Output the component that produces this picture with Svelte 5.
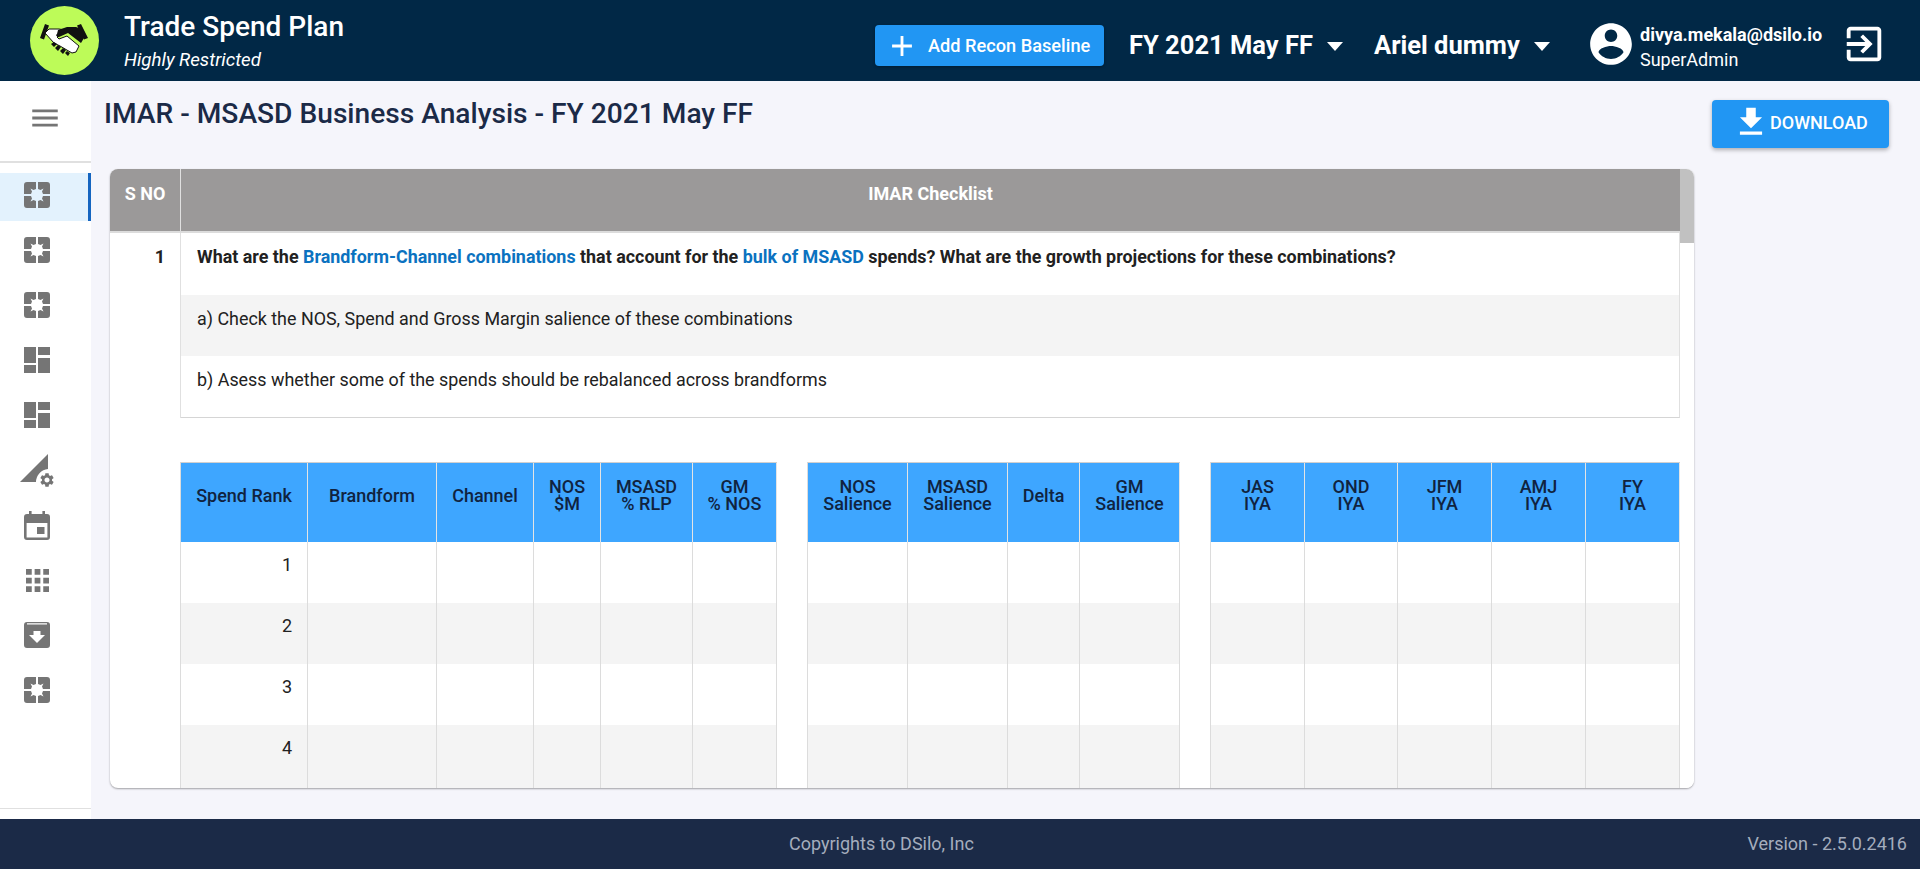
<script lang="ts">
  const nav = ['focus', 'focus', 'focus', 'dash', 'dash', 'signal', 'event', 'apps', 'archive', 'focus'];

  const tables = [
    [
      { label: ['Spend Rank'], w: 127 },
      { label: ['Brandform'], w: 129 },
      { label: ['Channel'], w: 97 },
      { label: ['NOS', '$M'], w: 67 },
      { label: ['MSASD', '% RLP'], w: 92 },
      { label: ['GM', '% NOS'], w: 84 }
    ],
    [
      { label: ['NOS', 'Salience'], w: 100 },
      { label: ['MSASD', 'Salience'], w: 100 },
      { label: ['Delta'], w: 72 },
      { label: ['GM', 'Salience'], w: 100 }
    ],
    [
      { label: ['JAS', 'IYA'], w: 94 },
      { label: ['OND', 'IYA'], w: 93 },
      { label: ['JFM', 'IYA'], w: 94 },
      { label: ['AMJ', 'IYA'], w: 94 },
      { label: ['FY', 'IYA'], w: 94 }
    ]
  ];
  const rows = [1, 2, 3, 4];
  const quadrant = 'M3 0H12V7L9.500 8 6.500 6.500 8 9.500 7 12H0V3A3 3 0 0 1 3 0Z';
</script>

<div class="page">
  <header class="topbar">
    <div class="logo">
      <svg width="50" height="34" viewBox="0 0 50 34">
        <path fill="#111" d="M5 0 9 1.500 4 15.500 0 14zM41 0 37 1.500 44 15.500 48 14z" />
        <path fill="#fff" stroke="#111" stroke-width="1" d="M9 5h10l6 1-8 7 2 2 8-3 12 10-3 6-4 1-12-7-6-3-9-10z" />
        <path fill="#111" d="M18 6 27 3h9l3 1 5 10-3 5-13-10-9 4c-2 0-4-2-2-3z" />
        <path fill="#111" d="m11 20 3-2 3 2-3 3zm4 4 3-3 3 2-3 4zm5 3 3-3 3 2-3 4zm5 2 2-2 3 2-2 3z" />
      </svg>
    </div>
    <div class="brand">
      <div class="brand-title">Trade Spend Plan</div>
      <div class="brand-sub">Highly Restricted</div>
    </div>
    <button class="add-btn">
      <svg width="34" height="34" viewBox="0 0 24 24"><path fill="#fff" d="M19 13h-6v6h-2v-6H5v-2h6V5h2v6h6z" /></svg>
      Add Recon Baseline
    </button>
    <div class="select first">FY 2021 May FF<span class="caret"></span></div>
    <div class="select second">Ariel dummy<span class="caret"></span></div>
    <svg class="avatar" width="50" height="50" viewBox="0 0 24 24"><path fill="#fff" d="M12 2C6.480 2 2 6.480 2 12s4.480 10 10 10 10-4.480 10-10S17.520 2 12 2zm0 3c1.660 0 3 1.340 3 3s-1.340 3-3 3-3-1.340-3-3 1.340-3 3-3zm0 14.200c-2.500 0-4.710-1.280-6-3.220.030-1.990 4-3.080 6-3.080 1.990 0 5.970 1.090 6 3.080-1.290 1.940-3.500 3.220-6 3.220z" /></svg>
    <div class="user">
      <div class="email">divya.mekala@dsilo.io</div>
      <div class="role">SuperAdmin</div>
    </div>
    <svg class="logout" width="46" height="46" viewBox="0 0 24 24"><path fill="#fff" d="M10.090 15.590 11.500 17l5-5-5-5-1.410 1.410L12.670 11H3v2h9.670l-2.580 2.590zM19 3H5c-1.110 0-2 .9-2 2v4h2V5h14v14H5v-4H3v4c0 1.100.89 2 2 2h14c1.100 0 2-.9 2-2V5c0-1.100-.9-2-2-2z" /></svg>
  </header>

  <div class="middle">
    <aside class="sidebar">
      <div class="burger">
        <svg width="34" height="34" viewBox="0 0 24 24"><path fill="#757575" d="M3 18h18v-2H3v2zm0-5h18v-2H3v2zm0-7v2h18V6H3z" /></svg>
      </div>
      <nav class="nav">
        {#each nav as icon, i}
          <div class="nav-item" class:active={i === 0}>
            <div class="icon">
              {#if icon === 'focus'}
                <svg width="26" height="26" viewBox="0 0 26 26" fill="#757575">
                  <path d={quadrant} />
                  <path d={quadrant} transform="rotate(90 13 13)" />
                  <path d={quadrant} transform="rotate(180 13 13)" />
                  <path d={quadrant} transform="rotate(270 13 13)" />
                </svg>
              {:else if icon === 'dash'}
                <svg width="26" height="26" viewBox="0 0 26 26"><path fill="#757575" d="M0 0h12v16H0zM14 0h12v8H14zM14 11h12v15H14zM0 18h12v8H0z" /></svg>
              {:else if icon === 'signal'}
                <svg width="34" height="34" viewBox="0 0 34 34" fill="#757575">
                  <path d="M0 29 28 1V16A13 13 0 0 0 16 29Z" />
                  <path transform="translate(18.600 18.600) scale(.7)" d="M19.140 12.940c.04-.3.06-.61.06-.94 0-.32-.02-.64-.07-.94l2.030-1.580c.18-.14.23-.41.12-.61l-1.920-3.320c-.12-.22-.37-.29-.59-.22l-2.390.96c-.5-.38-1.030-.7-1.620-.94l-.36-2.540c-.04-.24-.24-.41-.48-.41h-3.840c-.24 0-.43.17-.47.41l-.36 2.540c-.59.24-1.130.57-1.620.94l-2.390-.96c-.22-.08-.47 0-.59.22L2.740 8.870c-.12.21-.08.47.12.61l2.030 1.580c-.05.3-.09.63-.09.94s.02.64.07.94l-2.030 1.580c-.18.14-.23.41-.12.61l1.920 3.320c.12.22.37.29.59.22l2.390-.96c.5.38 1.030.7 1.620.94l.36 2.540c.05.24.24.41.48.41h3.840c.24 0 .44-.17.47-.41l.36-2.540c.59-.24 1.130-.56 1.620-.94l2.390.96c.22.08.47 0 .59-.22l1.920-3.320c.12-.22.07-.47-.12-.61l-2.010-1.580zM12 15.600c-1.980 0-3.600-1.620-3.600-3.600s1.620-3.600 3.600-3.600 3.600 1.620 3.600 3.600-1.620 3.600-3.600 3.600z" />
                </svg>
              {:else if icon === 'event'}
                <svg width="26" height="29" viewBox="0 0 26 29"><path fill="#757575" fill-rule="evenodd" d="M5 0h2.600v3h10.800V0H21v3h2a3 3 0 0 1 3 3v20a3 3 0 0 1-3 3H3a3 3 0 0 1-3-3V6a3 3 0 0 1 3-3h2zM2.600 12v14.400h20.800V12zM13 16h7.500v7H13z" /></svg>
              {:else if icon === 'apps'}
                <svg width="23" height="23" viewBox="0 0 24 24"><path fill="#757575" d="M0 0h6v6H0zM9 0h6v6H9zM18 0h6v6h-6zM0 9h6v6H0zM9 9h6v6H9zM18 9h6v6h-6zM0 18h6v6H0zM9 18h6v6H9zM18 18h6v6h-6z" /></svg>
              {:else}
                <svg width="26" height="26" viewBox="0 0 26 26"><path fill="#757575" fill-rule="evenodd" d="M3 0h20a3 3 0 0 1 3 3v20a3 3 0 0 1-3 3H3a3 3 0 0 1-3-3V3a3 3 0 0 1 3-3zm0 1.300v1.200h20V1.300zM9.500 9v4H5l8 8 8-8h-4.500V9z" /></svg>
              {/if}
            </div>
          </div>
        {/each}
      </nav>
      <div class="side-foot"></div>
    </aside>

    <main class="content">
      <div class="title-row">
        <h1>IMAR - MSASD Business Analysis - FY 2021 May FF</h1>
        <button class="download">
          <svg width="38" height="38" viewBox="0 0 24 24"><path fill="#fff" d="M19 9h-4V3H9v6H5l7 7 7-7zM5 18v2h14v-2H5z" /></svg>
          DOWNLOAD
        </button>
      </div>

      <section class="card">
        <div class="scroll-area">
          <div class="check-head">
            <div class="sno">S NO</div>
            <div class="check-title">IMAR Checklist</div>
          </div>
          <div class="check-body">
            <div class="num">1</div>
            <div class="check-list">
              <div class="q strong">What are the <span class="link">Brandform-Channel combinations</span> that account for the <span class="link">bulk of MSASD</span> spends? What are the growth projections for these combinations?</div>
              <div class="q alt">a) Check the NOS, Spend and Gross Margin salience of these combinations</div>
              <div class="q">b) Asess whether some of the spends should be rebalanced across brandforms</div>
            </div>
          </div>

          <div class="groups">
            {#each tables as columns, t}
              <div class="grid-table">
                <div class="grid-row head">
                  {#each columns as col}
                    <div class="th" style="width: {col.w}px">
                      {#each col.label as line}<span>{line}</span>{/each}
                    </div>
                  {/each}
                </div>
                {#each rows as r}
                  <div class="grid-row body" class:alt={r % 2 === 0}>
                    {#each columns as col, c}
                      <div class="td" style="width: {col.w}px">{t === 0 && c === 0 ? r : ''}</div>
                    {/each}
                  </div>
                {/each}
              </div>
            {/each}
          </div>
        </div>
        <div class="scrollbar"><div class="thumb"></div></div>
      </section>
    </main>
  </div>

  <footer class="footer">
    <span class="copy">Copyrights to DSilo, Inc</span>
    <span class="version">Version - 2.5.0.2416</span>
  </footer>
</div>

<style>
  :global(body) {
    margin: 0;
    font-family: Roboto, "Liberation Sans", sans-serif;
  }

  .page {
    display: flex;
    flex-direction: column;
    height: 869px;
    overflow: hidden;
    background: #f5f5fb;
  }

  .topbar {
    display: flex;
    align-items: center;
    flex: 0 0 81px;
    height: 81px;
    background: #012846;
    color: #fff;
    box-sizing: border-box;
    padding-left: 30px;
  }

  .logo {
    display: flex;
    align-items: center;
    justify-content: center;
    width: 69px;
    height: 69px;
    border-radius: 50%;
    background: #bdfb58;
    flex: none;
  }

  .brand {
    margin-left: 25px;
    width: 751px;
    padding-top: 1px;
  }

  .brand-title {
    font-size: 28px;
    font-weight: 500;
    line-height: 30px;
  }

  .brand-sub {
    font-size: 18.700px;
    font-style: italic;
    line-height: 20px;
    margin-top: 8px;
  }

  .add-btn {
    display: flex;
    align-items: center;
    width: 229px;
    height: 41px;
    margin-top: 10px;
    padding: 0 0 0 10px;
    border: 0;
    border-radius: 4px;
    background: #2196f3;
    color: #fff;
    font: 500 18.200px Roboto, sans-serif;
    white-space: nowrap;
    box-shadow: 0 1px 3px rgba(0, 0, 0, 0.3);
  }

  .add-btn svg {
    margin-right: 9px;
  }

  .select {
    display: flex;
    align-items: center;
    margin-top: 8px;
    font-size: 25.500px;
    font-weight: 700;
    white-space: nowrap;
  }

  .select.first {
    margin-left: 25px;
    width: 245px;
  }

  .select.second {
    width: 212px;
  }

  .caret {
    width: 0;
    height: 0;
    margin-left: 14px;
    margin-top: 4px;
    border-left: 8.500px solid transparent;
    border-right: 8.500px solid transparent;
    border-top: 9px solid #fff;
  }

  .avatar {
    flex: none;
    margin-top: 7px;
  }

  .user {
    margin-left: 4px;
    margin-top: 14px;
    width: 201px;
  }

  .email {
    font-size: 18px;
    font-weight: 700;
    line-height: 20px;
  }

  .role {
    font-size: 18px;
    line-height: 20px;
    margin-top: 5px;
  }

  .logout {
    flex: none;
    margin-top: 6px;
  }

  .middle {
    display: flex;
    flex: 1;
    min-height: 0;
  }

  .sidebar {
    display: flex;
    flex-direction: column;
    width: 91px;
    flex: none;
    background: #fff;
  }

  .burger {
    display: flex;
    align-items: center;
    justify-content: center;
    height: 82px;
    box-sizing: border-box;
    margin-left: -1px;
    padding-bottom: 6px;
    border-bottom: 2px solid #e0e0e0;
  }

  .nav {
    flex: 1;
    padding-top: 10px;
  }

  .nav-item {
    display: flex;
    align-items: center;
    height: 48px;
    margin-bottom: 7px;
    padding: 0 0 4px 24px;
    box-sizing: border-box;
  }

  .nav-item.active {
    background: #e3f2fd;
    box-shadow: inset -3px 0 0 #1565c0;
  }

  .icon {
    display: flex;
    justify-content: center;
    align-items: center;
    width: 26px;
  }

  .icon svg {
    flex: none;
  }

  .side-foot {
    height: 10px;
    border-top: 1px solid #e0e0e0;
  }

  .content {
    flex: 1;
    min-width: 0;
    padding: 0 31px 0 13px;
    box-sizing: border-box;
  }

  .title-row {
    display: flex;
    justify-content: space-between;
    align-items: flex-start;
    height: 88px;
  }

  h1 {
    margin: 17px 0 0;
    font-size: 28.150px;
    line-height: 32px;
    font-weight: 500;
    color: #1b2a47;
  }

  .download {
    display: flex;
    align-items: center;
    width: 177px;
    height: 48px;
    margin-top: 19px;
    padding: 0 0 4px 20px;
    border: 0;
    border-radius: 4px;
    background: #2196f3;
    color: #fff;
    font: 500 18px Roboto, sans-serif;
    box-shadow: 0 2px 4px rgba(0, 0, 0, 0.3);
  }

  .card {
    display: flex;
    width: 1584px;
    height: 619px;
    margin-left: 6px;
    background: #fff;
    border-radius: 8px;
    overflow: hidden;
    box-shadow: 0 1px 2px rgba(0, 0, 0, 0.35);
  }

  .scroll-area {
    width: 1570px;
    overflow: hidden;
  }

  .scrollbar {
    width: 14px;
    background: #fff;
  }

  .thumb {
    height: 74px;
    background: #c1c1c1;
  }

  .check-head {
    display: flex;
    height: 64px;
    background: #9b9999;
    color: #fff;
    font-size: 18px;
    font-weight: 700;
    border-bottom: 2px solid #dcdcdc;
    box-sizing: border-box;
  }

  .sno {
    width: 71px;
    box-sizing: border-box;
    padding-top: 14px;
    text-align: center;
    border-right: 1px solid #e0e0e0;
  }

  .check-title {
    flex: 1;
    padding-top: 14px;
    text-align: center;
  }

  .check-body {
    display: flex;
  }

  .num {
    width: 71px;
    box-sizing: border-box;
    padding: 14px 15px 0 0;
    text-align: right;
    font-size: 18px;
    line-height: 20px;
    font-weight: 700;
    color: #212121;
    border-right: 1px solid #e0e0e0;
  }

  .check-list {
    flex: 1;
    border-bottom: 1px solid #d5d5d5;
    border-right: 1px solid #e0e0e0;
  }

  .q {
    height: 61px;
    box-sizing: border-box;
    padding: 14px 0 0 16px;
    font-size: 17.900px;
    line-height: 20px;
    color: #212121;
  }

  .q.strong {
    height: 62px;
    font-weight: 700;
  }

  .q.alt {
    background: #f4f4f4;
  }

  .link {
    color: #0b72c0;
  }

  .groups {
    display: flex;
    gap: 30px;
    margin: 44px 0 0 70px;
  }

  .grid-table {
    border-left: 1px solid #dcdcdc;
    border-top: 1px solid #d0d0d0;
  }

  .grid-row {
    display: flex;
  }

  .th {
    display: flex;
    flex-direction: column;
    align-items: center;
    height: 79px;
    padding-top: 15px;
    box-sizing: border-box;
    background: #3ea6ff;
    border-right: 1px solid #e4e4e4;
    font-size: 18px;
    font-weight: 500;
    line-height: 17px;
    color: #10233f;
    text-align: center;
  }

  .th span:only-child {
    padding-top: 9px;
  }

  .grid-row.body {
    height: 61px;
  }

  .grid-row.body:last-child {
    height: 66px;
  }

  .grid-row.alt {
    background: #f4f4f4;
  }

  .td {
    box-sizing: border-box;
    padding: 13px 15px 0 0;
    text-align: right;
    border-right: 1px solid #dcdcdc;
    font-size: 18px;
    line-height: 20px;
    color: #212121;
  }

  .footer {
    display: flex;
    align-items: center;
    justify-content: space-between;
    flex: 0 0 50px;
    box-sizing: border-box;
    padding: 0 13px 1px 789px;
    background: #1b2a47;
    color: #a4adbd;
    font-size: 18px;
  }
</style>
